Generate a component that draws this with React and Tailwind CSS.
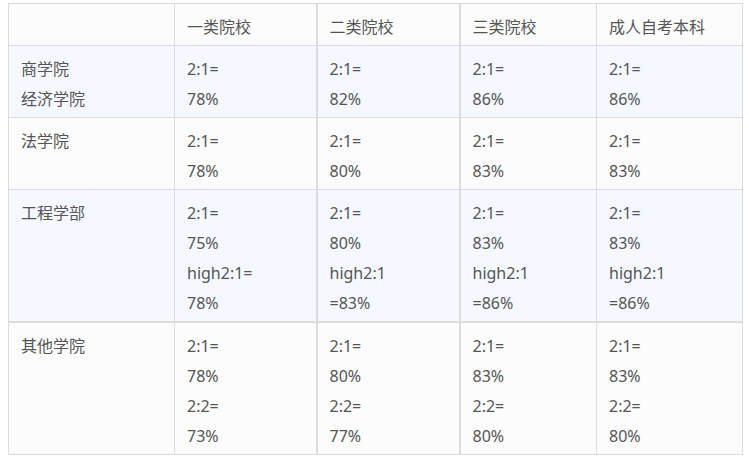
const headers = ["", "一类院校", "二类院校", "三类院校", "成人自考本科"];

const rows = [
  {
    name: ["商学院", "经济学院"],
    cells: [["2:1=", "78%"], ["2:1=", "82%"], ["2:1=", "86%"], ["2:1=", "86%"]],
    tint: true,
  },
  {
    name: ["法学院"],
    cells: [["2:1=", "78%"], ["2:1=", "80%"], ["2:1=", "83%"], ["2:1=", "83%"]],
    tint: false,
  },
  {
    name: ["工程学部"],
    cells: [
      ["2:1=", "75%", "high2:1=", "78%"],
      ["2:1=", "80%", "high2:1", "=83%"],
      ["2:1=", "83%", "high2:1", "=86%"],
      ["2:1=", "83%", "high2:1", "=86%"],
    ],
    tint: true,
    thickBottom: true,
  },
  {
    name: ["其他学院"],
    cells: [
      ["2:1=", "78%", "2:2=", "73%"],
      ["2:1=", "80%", "2:2=", "77%"],
      ["2:1=", "83%", "2:2=", "80%"],
      ["2:1=", "83%", "2:2=", "80%"],
    ],
    tint: false,
  },
];

// the 2nd and 3rd school columns have a heavier right edge
const colBorder = [
  "border-r",
  "border-r-2",
  "border-r-2",
  "border-r",
  "border-r",
];

const Lines = ({ lines }) => (
  <>
    {lines.map((l, i) => (
      <div key={i} className="whitespace-nowrap">
        {l}
      </div>
    ))}
  </>
);

const App = () => {
  return (
    <div className="min-h-screen w-[749px] bg-white pl-2 pt-[3px]">
      <table
        className="w-[734px] table-fixed border-collapse border border-[#dcdcdc] text-[16px] leading-[30px] text-[#555]"
        style={{ fontFamily: '"Noto Sans", "Noto Sans CJK SC", sans-serif' }}
      >
        <colgroup>
          <col className="w-[166px]" />
          <col className="w-[142px]" />
          <col className="w-[143px]" />
          <col className="w-[137px]" />
          <col className="w-[146px]" />
        </colgroup>
        <thead>
          <tr className="bg-[#fcfcfc]">
            {headers.map((h, i) => (
              <th
                key={i}
                className={`${colBorder[i]} border-b border-[#dcdcdc] pb-[3px] pl-3 pt-2 text-left align-top font-normal`}
              >
                {h}
              </th>
            ))}
          </tr>
        </thead>
        <tbody>
          {rows.map((row, r) => (
            <tr
              key={r}
              className={row.tint ? "bg-[#f5f9ff]" : "bg-[#fcfcfc]"}
            >
              <td
                className={`${colBorder[0]} ${
                  row.thickBottom ? "border-b-2" : "border-b"
                } border-[#dcdcdc] pb-[3px] pl-3 pt-2 align-top`}
              >
                <Lines lines={row.name} />
              </td>
              {row.cells.map((c, i) => (
                <td
                  key={i}
                  className={`${colBorder[i + 1]} ${
                    row.thickBottom ? "border-b-2" : "border-b"
                  } border-[#dcdcdc] pb-[3px] pl-3 pt-2 align-top`}
                >
                  <Lines lines={c} />
                </td>
              ))}
            </tr>
          ))}
        </tbody>
      </table>
    </div>
  );
};

export default App;
